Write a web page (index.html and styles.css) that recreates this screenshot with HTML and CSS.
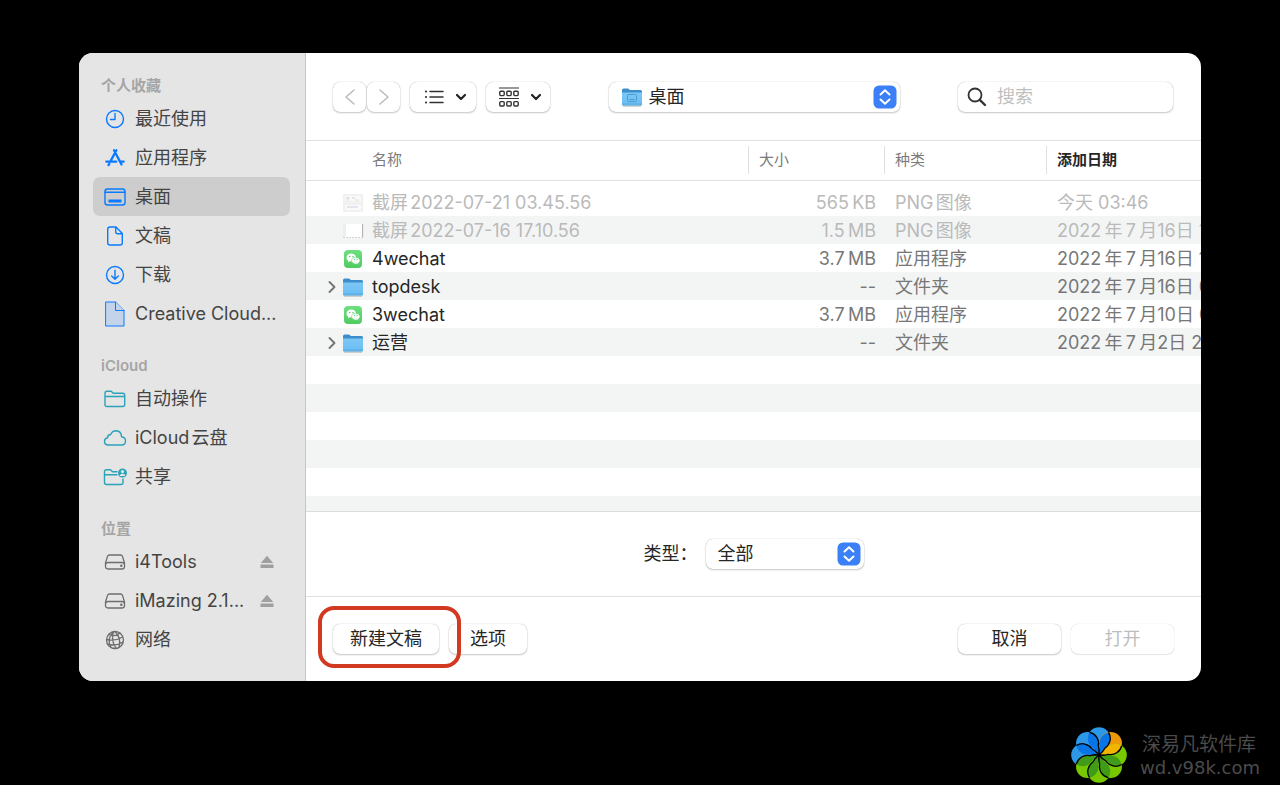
FILE: index.html
```html
<!DOCTYPE html>
<html lang="zh-CN">
<head>
<meta charset="utf-8">
<title>桌面</title>
<link rel="stylesheet" href="styles.css">
</head>
<body>
<svg class="defs" aria-hidden="true">
  <defs>
    <linearGradient id="g-folder" x1="0" y1="0" x2="0" y2="1"><stop offset="0" stop-color="#7cc8f6"/><stop offset="1" stop-color="#69bcf1"/></linearGradient>
    <linearGradient id="g-chat" x1="0" y1="0" x2="0" y2="1"><stop offset="0" stop-color="#6ee07d"/><stop offset="1" stop-color="#4fcb63"/></linearGradient>
  </defs>
  <symbol id="folder" viewBox="0 0 22 20">
    <path d="M1 3.2Q1 1.4 2.6 1.4H7L9 3H19.5Q21 3 21 4.5V8H1Z" fill="#3d8fcb"/>
    <path d="M1 5.4H21V17.4Q21 18.8 19.6 18.8H2.4Q1 18.8 1 17.4Z" fill="url(#g-folder)"/>
    <path d="M1 17H21" stroke="#56a9e2"/><path d="M2 19.1H20" stroke="#999" stroke-width=".7"/>
  </symbol>
  <symbol id="chat" viewBox="0 0 20 20">
    <rect x="1" y="1" width="18" height="18" rx="4" fill="url(#g-chat)"/>
    <path d="M8.3 4.600c-2.800 0-4.800 1.800-4.800 4 0 1.300.7 2.300 1.700 3l-.4 1.600 1.800-.9c.6.2 1.100.2 1.700.2 2.700 0 4.800-1.700 4.800-3.900s-2.100-4-4.800-4Z" fill="#fff"/>
    <path d="M12.700 8.200c-2.400 0-4.200 1.500-4.200 3.400s1.800 3.400 4.200 3.400c.5 0 1-.1 1.400-.2l1.500.8-.3-1.400c1-.6 1.600-1.600 1.600-2.600 0-1.900-1.800-3.400-4.200-3.400Z" fill="#fff" stroke="#5dd36f" stroke-width=".6"/>
    <g fill="#52c966"><circle cx="6.700" cy="7.500" r=".7"/><circle cx="9.900" cy="7.500" r=".7"/><circle cx="11.400" cy="10.700" r=".6"/><circle cx="14.100" cy="10.700" r=".6"/></g>
  </symbol>
  <symbol id="stepper" viewBox="0 0 24 24">
    <rect width="23" height="23" x=".5" y=".5" rx="5.500" fill="#3b80f6"/>
    <path d="M7.500 9.500 12 5.300l4.500 4.200M7.500 14.500 12 18.700l4.500-4.200" fill="none" stroke="#fff" stroke-width="2" stroke-linecap="round" stroke-linejoin="round"/>
  </symbol>
  <symbol id="disk" viewBox="0 0 24 24">
    <path d="M6.500 5h11q1.500 0 2 1.400l2 6.600v3.500q0 2.500-2.500 2.500H5q-2.500 0-2.500-2.500V13l2-6.600Q5 5 6.500 5ZM2.700 14.200q.6-1.700 2.300-1.700h14q1.700 0 2.300 1.700"/><circle cx="18.300" cy="15.700" r=".6"/>
  </symbol>
  <symbol id="eject" viewBox="0 0 14 14"><path d="M7 .8 13.200 8H.8ZM.5 9.600h13v3.400H.5Z"/></symbol>
  <symbol id="disclosure" viewBox="0 0 10 14"><path d="M2.500 2 7.500 7l-5 5" fill="none" stroke="#747474" stroke-width="1.900" stroke-linecap="round" stroke-linejoin="round"/></symbol>
  <symbol id="chevron" viewBox="0 0 12 8"><path d="M2 2 6 6l4-4" fill="none" stroke="#222" stroke-width="2.200" stroke-linecap="round" stroke-linejoin="round"/></symbol>
</svg>

<div class="dialog" role="dialog" aria-label="打开">
  <nav class="sidebar">
    <section>
      <h2>个人收藏</h2>
      <ul>
        <li><button class="place"><svg class="ico" viewBox="0 0 24 24"><circle cx="12" cy="12" r="8.500"/><path d="M12 6.500V12.500H7.500"/></svg><span>最近使用</span></button></li>
        <li><button class="place"><svg class="ico thick" viewBox="0 0 24 24"><path d="M11 4.200l7.500 14.200M13.400 4.200 7.800 14.600M6.300 17.800l-.8 1.300M3.300 15.600h10M17.200 15.600h3.500"/></svg><span>应用程序</span></button></li>
        <li><button class="place current" aria-current="true"><svg class="ico" viewBox="0 0 24 24"><rect x="2" y="4" width="20" height="16" rx="2.500"/><path d="M2 7.300h20"/><path d="M5.500 14.600h13v2.800h-13Z" class="solid"/></svg><span>桌面</span></button></li>
        <li><button class="place"><svg class="ico" viewBox="0 0 24 24"><path d="M13 3H7Q4.700 3 4.700 5.300v13.400Q4.700 21 7 21h10q2.300 0 2.300-2.300V9.500ZM12.700 3v4.700q0 2 2 2h4.600"/></svg><span>文稿</span></button></li>
        <li><button class="place"><svg class="ico" viewBox="0 0 24 24"><circle cx="12" cy="12" r="8.500"/><path d="M12 7.300v9M8.700 13l3.300 3.300 3.300-3.300"/></svg><span>下载</span></button></li>
        <li><button class="place"><svg class="ico sheet" viewBox="0 0 24 28"><path d="M3 2h9.500l8.500 8.500V26H3Z"/><path d="M12.500 2v8.500H21"/></svg><span>Creative Cloud...</span></button></li>
      </ul>
    </section>
    <section>
      <h2>iCloud</h2>
      <ul class="teal">
        <li><button class="place"><svg class="ico" viewBox="0 0 24 24"><path d="M2 17.500V6.300Q2 4.300 4 4.300h4.200l2 2H19.700q2 0 2 2v9.200q0 2-2 2H4q-2 0-2-2ZM2 9.500h19.700"/></svg><span>自动操作</span></button></li>
        <li><button class="place"><svg class="ico" viewBox="0 0 24 24"><path d="M5.500 19Q1.500 19 1.500 15.500 1.500 12.400 4.600 11.700 4.600 8.700 7.700 8.500 9.200 4.700 13 4.700 18.400 4.900 18.500 10.700 22.500 11.200 22.500 15 22.500 19 18.500 19Z"/></svg><span>iCloud云盘</span></button></li>
        <li><button class="place"><svg class="ico" viewBox="0 0 24 24"><path d="M14 6.700H9.500l-2-2H3.500q-2 0-2 2V17.500q0 2 2 2H18q2 0 2-2v-3.500M1.500 9.700h12.500"/><circle cx="19.500" cy="8" r="4.500" class="solid"/><path d="M16.900 11q0-2.300 2.600-2.300t2.600 2.300Z" class="cut"/><circle cx="19.500" cy="6.600" r="1.600" class="cut"/></svg><span>共享</span></button></li>
      </ul>
    </section>
    <section>
      <h2>位置</h2>
      <ul class="gray">
        <li class="volume"><button class="place"><svg class="ico"><use href="#disk"/></svg><span>i4Tools</span></button><button class="eject" aria-label="推出 i4Tools"><svg><use href="#eject"/></svg></button></li>
        <li class="volume"><button class="place"><svg class="ico"><use href="#disk"/></svg><span>iMazing 2.1...</span></button><button class="eject" aria-label="推出 iMazing"><svg><use href="#eject"/></svg></button></li>
        <li><button class="place"><svg class="ico" viewBox="0 0 24 24"><circle cx="12" cy="12" r="8.500"/><path d="M10.500 3.700Q7.500 12 13 20.400M10.500 3.700Q3 11 8 19.500M12 3.500Q18.500 10 16 19.500M3.600 11.500Q12 13.500 19.800 9M5.700 6.500Q12 9.500 17 5M4.500 16.200Q13 18.500 20 14"/></svg><span>网络</span></button></li>
      </ul>
    </section>
  </nav>

  <main class="main">
    <header class="toolbar">
      <div class="tools">
        <div class="history">
          <button class="control nav" aria-label="后退"><svg viewBox="0 0 12 18"><path d="M10 2 2 9l8 7"/></svg></button>
          <button class="control nav" aria-label="前进"><svg viewBox="0 0 12 18"><path d="M2 2l8 7-8 7"/></svg></button>
        </div>
        <button class="control view" aria-label="列表显示">
          <svg class="glyph" viewBox="0 0 20 20"><path d="M6 4.500h13M6 10h13M6 15.500h13" stroke="#333" stroke-width="1.500" stroke-linecap="round"/><g fill="#333"><circle cx="2" cy="4.500" r="1.100"/><circle cx="2" cy="10" r="1.100"/><circle cx="2" cy="15.500" r="1.100"/></g></svg>
          <svg class="chev"><use href="#chevron"/></svg>
        </button>
        <button class="control view grouped" aria-label="分组">
          <svg class="glyph" viewBox="0 0 20 20" fill="none" stroke="#333" stroke-width="1.400"><path d="M0 1h20M0 11.500h20" stroke-width="1.200"/><rect x=".8" y="4.200" width="4.400" height="4.400" rx="1"/><rect x="7.800" y="4.200" width="4.400" height="4.400" rx="1"/><rect x="14.800" y="4.200" width="4.400" height="4.400" rx="1"/><rect x=".8" y="14.600" width="4.400" height="4.400" rx="1"/><rect x="7.800" y="14.600" width="4.400" height="4.400" rx="1"/><rect x="14.800" y="14.600" width="4.400" height="4.400" rx="1"/></svg>
          <svg class="chev"><use href="#chevron"/></svg>
        </button>
      </div>
      <div class="popup location">
        <select class="control" aria-label="位置"><option>桌面</option></select>
        <svg class="lead" viewBox="0 0 22 20"><use href="#folder"/><rect x="6.500" y="7.500" width="9" height="7" rx="1" fill="none" stroke="#4a9cd3"/><path d="M8.500 12.500h5" stroke="#4a9cd3"/></svg>
        <svg class="step"><use href="#stepper"/></svg>
      </div>
      <div class="search">
        <svg viewBox="0 0 20 20"><circle cx="8" cy="8" r="6.500"/><path d="M12.800 12.800 18 18" stroke-width="2.400"/></svg>
        <input class="control" type="search" placeholder="搜索" aria-label="搜索">
      </div>
    </header>

    <div class="files">
      <table>
        <colgroup><col><col class="c-size"><col class="c-kind"><col class="c-date"></colgroup>
        <thead><tr><th>名称</th><th>大小</th><th>种类</th><th class="sorted">添加日期</th></tr></thead>
        <tbody>
          <tr class="off"><td><div class="name"><i></i><svg viewBox="0 0 22 20"><path d="M1 1h20v18H1Z" fill="#f1f1f1"/><path d="M3 3h16v5H3ZM3 12h16v5H3Z" fill="#fafafa"/><path d="M4 5h4M10 5h3M5 14h11" stroke="#c9d2e3"/><path d="M4 7h3M13 7h4" stroke="#ddd"/></svg>截屏2022-07-21 03.45.56</div></td><td>565&#8201;KB</td><td>PNG图像</td><td>今天 03:46</td></tr>
          <tr class="off"><td><div class="name"><i></i><svg viewBox="0 0 22 20"><path d="M1 3h20v13.500H1Z" fill="#fff"/><path d="M1 3h3v13H1Z" fill="#eee"/><path d="M1 16.500h20" stroke="#d3d3cd" stroke-dasharray="2 1"/><path d="M20.600 3v13" stroke="#aaa"/></svg>截屏2022-07-16 17.10.56</div></td><td>1.5&#8201;MB</td><td>PNG图像</td><td>2022&#8201;年&#8201;7&#8201;月16日 1</td></tr>
          <tr><td><div class="name"><i></i><svg><use href="#chat"/></svg>4wechat</div></td><td>3.7&#8201;MB</td><td>应用程序</td><td>2022&#8201;年&#8201;7&#8201;月16日 1</td></tr>
          <tr><td><div class="name"><button class="open" aria-label="展开 topdesk"><svg><use href="#disclosure"/></svg></button><svg><use href="#folder"/></svg>topdesk</div></td><td>--</td><td>文件夹</td><td>2022&#8201;年&#8201;7&#8201;月16日 0</td></tr>
          <tr><td><div class="name"><i></i><svg><use href="#chat"/></svg>3wechat</div></td><td>3.7&#8201;MB</td><td>应用程序</td><td>2022&#8201;年&#8201;7&#8201;月10日 0</td></tr>
          <tr><td><div class="name"><button class="open" aria-label="展开 运营"><svg><use href="#disclosure"/></svg></button><svg><use href="#folder"/></svg>运营</div></td><td>--</td><td>文件夹</td><td>2022&#8201;年&#8201;7&#8201;月2日 2</td></tr>
        </tbody>
      </table>
    </div>

    <div class="filter">
      <label for="type">类型：</label>
      <div class="popup type">
        <select class="control" id="type"><option>全部</option></select>
        <svg class="step"><use href="#stepper"/></svg>
      </div>
    </div>

    <footer class="actions">
      <div class="marked"><button class="control">新建文稿</button></div>
      <button class="control options">选项</button>
      <button class="control wide cancel">取消</button>
      <button class="control wide" disabled>打开</button>
    </footer>
  </main>
</div>

<aside class="brand">
  <svg viewBox="-30 -28 60 56" aria-hidden="true">
    <defs>
      <circle id="petal" cy="-16.500" r="11.300"/>
      <path id="lens" d="M9.500-22.600A11.300 11.300 0 0 1 6-7L0 0 .7-9.200A11.300 11.300 0 0 1 9.500-22.600Z"/>
      <path id="arm" d="M9.500-22.600A11.300 11.300 0 0 1 6-7Q4-3 0 0"/>
    </defs>
    <g fill="#2d97e8"><use href="#petal"/><use href="#petal" transform="rotate(-45)"/><use href="#petal" transform="rotate(-90)"/></g>
    <use href="#petal" transform="rotate(45)" fill="#ee9a08"/>
    <g fill="#78c800"><use href="#petal" transform="rotate(90)"/><use href="#petal" transform="rotate(135)"/><use href="#petal" transform="rotate(180)"/><use href="#petal" transform="rotate(225)"/></g>
    <g fill="#0875e6"><use href="#lens"/><use href="#lens" transform="rotate(-45)"/><use href="#lens" transform="rotate(-90)"/></g>
    <use href="#lens" transform="rotate(45)" fill="#f2b400"/>
    <g fill="#409c18"><use href="#lens" transform="rotate(90)"/><use href="#lens" transform="rotate(135)"/><use href="#lens" transform="rotate(180)"/><use href="#lens" transform="rotate(225)"/></g>
    <g fill="none" stroke="#000" stroke-width="1.300">
      <use href="#arm"/><use href="#arm" transform="rotate(45)"/><use href="#arm" transform="rotate(90)"/><use href="#arm" transform="rotate(135)"/><use href="#arm" transform="rotate(180)"/><use href="#arm" transform="rotate(225)"/><use href="#arm" transform="rotate(270)"/><use href="#arm" transform="rotate(315)"/>
    </g>
    <circle r="2"/>
  </svg>
  <div><p class="brand-name">深易凡软件库</p><p class="brand-url">wd.v98k.com</p></div>
</aside>
</body>
</html>
```
FILE: styles.css
```css
* { box-sizing: border-box; }
body {
  margin: 0;
  min-height: 100vh;
  padding: 53px 79px 0;
  background: #000;
  color: #262626;
  font-family: Inter, "Noto Sans CJK SC", sans-serif;
  font-size: 18px;
  line-height: 28px;
  text-autospace: normal;
}
.defs { position: absolute; width: 0; height: 0; }
button, select, input { font: inherit; color: inherit; text-autospace: inherit; }
button { border: 0; padding: 0; background: none; }
ul { list-style: none; margin: 0; padding: 0; }

.dialog {
  display: flex;
  border-radius: 14px;
  overflow: hidden;
  background: #fff;
}

/* Sidebar */
.sidebar {
  flex: none;
  display: flex;
  flex-direction: column;
  gap: 19px;
  width: 227px;
  padding: 19px 15px 22px 14px;
  background: #e5e5e5;
  border-right: 1px solid #c4c4c4;
  color: #444;
}
.sidebar h2 {
  margin: 0;
  padding-left: 8px;
  font-size: 15px;
  line-height: 27px;
  font-weight: 600;
  color: #a5a5a5;
}
.place {
  display: flex;
  align-items: center;
  gap: 8px;
  width: 100%;
  height: 39px;
  padding-left: 10px;
  border-radius: 7px;
  text-align: left;
  white-space: nowrap;
}
.place.current { background: #cdcdcd; }
.volume { display: flex; align-items: center; padding-right: 16px; }
.volume .place { flex: 1; min-width: 0; }
.eject { display: flex; }
.eject svg { width: 14px; height: 14px; fill: #9f9f9f; }
.ico {
  flex: none;
  width: 24px;
  height: 24px;
  fill: none;
  stroke: #0a7aff;
  stroke-width: 1.4;
  stroke-linecap: round;
  stroke-linejoin: round;
}
.ico .solid { fill: #0a7aff; stroke: none; }
.thick { stroke-width: 2.3; }
.sheet { height: 28px; fill: #c3d4ea; stroke-width: 1; stroke-linejoin: miter; }
.teal .ico { stroke: #2ba3b8; }
.teal .ico .solid { fill: #2ba3b8; }
.teal .ico .cut { fill: #e5e5e5; stroke: none; }
.gray .ico { stroke: #6d6d6d; stroke-width: 1.3; }

/* Controls */
.control {
  height: 30px;
  border: 0;
  border-radius: 7px;
  background: #fff;
  box-shadow: 0 0 1px rgba(0, 0, 0, .35), 0 1px 2px rgba(0, 0, 0, .2);
}
.control:disabled { color: #bdbdbd; box-shadow: 0 0 1px rgba(0, 0, 0, .25), 0 1px 1px rgba(0, 0, 0, .08); }
.popup { position: relative; }
.popup select { appearance: none; width: 100%; padding: 0 36px 0 12px; }
.popup svg { position: absolute; pointer-events: none; }
.step { top: 3px; right: 3px; width: 24px; height: 24px; }

/* Main column */
.main { flex: 1; min-width: 0; }
.toolbar {
  display: flex;
  align-items: center;
  justify-content: space-between;
  gap: 16px;
  height: 88px;
  padding: 0 28px 0 27px;
  border-bottom: 1px solid #dfdfdf;
}
.tools { display: flex; gap: 10px; }
.history { display: flex; gap: 1px; }
.nav { display: grid; place-items: center; width: 33px; }
.nav svg { width: 12px; height: 18px; fill: none; stroke: #bcbcbc; stroke-width: 1.6; stroke-linecap: round; stroke-linejoin: round; }
.view { display: flex; align-items: center; gap: 11px; width: 66px; padding-left: 14px; }
.grouped { width: 64px; padding-left: 13px; }
.glyph { width: 20px; height: 20px; }
.chev { width: 12px; height: 8px; }
.location { flex: 0 1 291px; }
.location select { padding-left: 40px; }
.lead { top: 5px; left: 12px; width: 22px; height: 20px; }
.search { position: relative; flex: 0 1 215px; }
.search svg { position: absolute; top: 5px; left: 9px; width: 20px; height: 20px; fill: none; stroke: #333; stroke-width: 1.8; stroke-linecap: round; }
.search input { display: block; width: 100%; padding: 0 8px 0 39px; }
.search input::placeholder { color: #bfbfbf; opacity: 1; }

/* File list */
.files {
  height: 371px;
  overflow: hidden;
  border-bottom: 1px solid #dcdcdc;
  background: repeating-linear-gradient(#fff 0 28px, #f3f5f5 28px 56px) 0 47px no-repeat;
}
table { width: 100%; table-layout: fixed; border-collapse: collapse; }
.c-size { width: 136px; }
.c-kind { width: 162px; }
.c-date { width: 155px; }
th {
  height: 39px;
  padding: 0 0 0 11px;
  border-bottom: 1px solid #dfdfdf;
  background: linear-gradient(#dfdfdf, #dfdfdf) 0 center / 1px 28px no-repeat;
  text-align: left;
  font-size: 15px;
  font-weight: 400;
  color: #7b7b7b;
}
th:first-child { padding-left: 66px; background: none; }
th.sorted { font-weight: 700; color: #262626; }
tbody::before { content: ""; display: block; height: 8px; }
td {
  height: 28px;
  padding: 0 0 0 11px;
  overflow: hidden;
  white-space: nowrap;
  color: #777;
}
td:first-child { padding-left: 20px; color: #262626; }
td:nth-child(2) { padding-right: 8px; text-align: right; }
td:nth-child(4) { text-autospace: no-autospace; }
.off td, .off td:first-child { color: #bababa; }
.name { display: flex; align-items: center; }
.name > svg { width: 22px; height: 20px; margin-right: 8px; }
.name i, .open { flex: none; width: 16px; }
.open { display: flex; }
.open svg { width: 12px; height: 14px; }

/* Type filter and action buttons */
.filter {
  display: flex;
  align-items: center;
  justify-content: center;
  gap: 8px;
  height: 85px;
  border-bottom: 1px solid #dfdfdf;
}
.type { width: 158px; }
.actions {
  display: flex;
  align-items: center;
  gap: 10px;
  height: 84px;
  padding: 0 27px;
}
.actions .control { padding: 0 17px; }
.marked { position: relative; }
.marked::after {
  content: "";
  position: absolute;
  z-index: 1;
  inset: -18px -22px -14px -15px;
  border: 4px solid #d13a20;
  border-radius: 16px;
  pointer-events: none;
}
.actions .options { padding: 0 21px; }
.actions .wide { width: 103px; }
.cancel { margin-left: auto; }

/* Site mark */
.brand {
  display: flex;
  justify-content: flex-end;
  gap: 11px;
  margin: 46px -59px 0 0;
  color: #4b4b4b;
}
.brand svg { width: 60px; height: 56px; }
.brand p { margin: 0; line-height: 23px; }
.brand div { padding-top: 6px; }
.brand-name { padding-left: 2px; font-size: 19px; }
.brand-url { font-family: "DejaVu Sans", sans-serif; font-size: 18px; }
```
